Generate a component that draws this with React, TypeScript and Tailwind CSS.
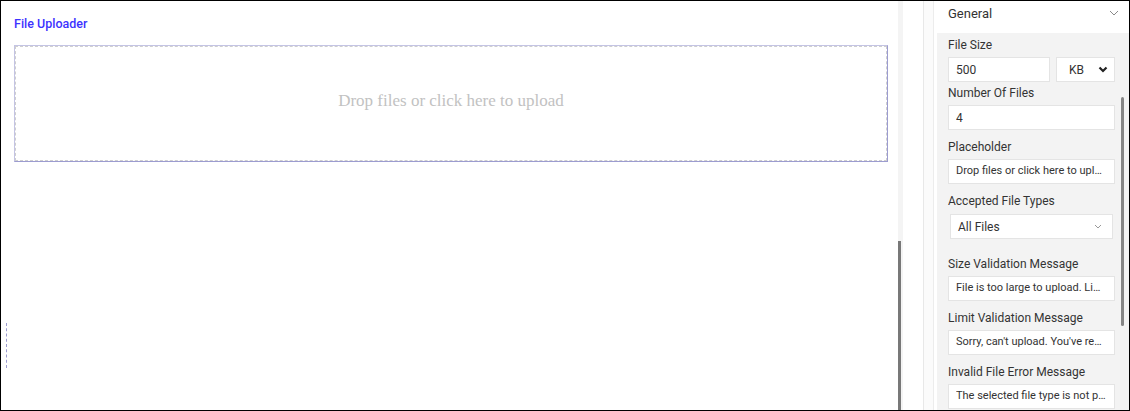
import { ReactNode } from "react";

function Label({ children, className = "" }: { children: ReactNode; className?: string }) {
  return (
    <div className={`h-[16px] text-[12px] leading-[16px] text-[#333] ${className}`}>{children}</div>
  );
}

function TextBox({ value, small = false }: { value: string; small?: boolean }) {
  return (
    <div
      className={`mt-[4px] flex h-[25px] min-w-0 items-center overflow-hidden border border-[#e4e4e4] bg-white px-[7px] text-[#333] ${
        small ? "text-[11px]" : "text-[12px]"
      }`}
    >
      <span className="min-w-0 truncate">{value}</span>
    </div>
  );
}

function Field({ label, value, small, first }: { label: string; value: string; small?: boolean; first?: boolean }) {
  return (
    <div className={first ? "" : "mt-[9px]"}>
      <Label>{label}</Label>
      <TextBox value={value} small={small} />
    </div>
  );
}

export default function App() {
  return (
    <div
      className="flex h-[411px] w-[1130px] overflow-hidden border border-black bg-white"
      style={{ fontFamily: "Roboto, 'Liberation Sans', sans-serif" }}
    >
      {/* canvas */}
      <div className="relative w-[897px] shrink-0 pl-[13px] pr-[10px] pt-[15px]">
        <div className="h-[16px] text-[12.5px] font-medium leading-[16px] text-[#3d33ff]">File Uploader</div>
        <div className="mt-[13px] h-[117px] border border-[#c4c4e4] border-b-[#9c9cd0] border-r-[#9c9cd0]">
          <div className="flex h-full items-center justify-center border border-dashed border-[#cfcfcf] pb-[6px]">
            <span
              className="text-[17px] text-[#c2c2c2]"
              style={{ fontFamily: "'Liberation Serif', 'Times New Roman', serif" }}
            >
              Drop files or click here to upload
            </span>
          </div>
        </div>
        <div className="absolute left-[5px] top-[322px] h-[45px] border-l border-dashed border-[#9c9cd0]" />
      </div>

      {/* canvas scrollbar */}
      <div className="flex w-[5px] shrink-0 flex-col bg-[#f4f4f4]">
        <div className="h-[240px]" />
        <div className="w-[3px] flex-1 bg-[#787878]" />
      </div>

      <div className="w-[20px] shrink-0 bg-white" />
      <div className="w-[10px] shrink-0 border-l border-[#e8e8e8] bg-[#fbfbfb]" />

      {/* properties panel */}
      <div className="flex min-w-0 flex-1 flex-col border-l border-[#ececec]">
        <div className="flex h-[32px] shrink-0 items-start justify-between bg-white pl-[14px] pr-[10px] pt-[5px]">
          <span className="text-[13px] leading-[16px] text-[#333]">General</span>
          <svg width="10" height="6" viewBox="0 0 10 6" className="mt-[4px]">
            <path d="M1 1l4 4 4-4" fill="none" stroke="#8a8a8a" strokeWidth="1" />
          </svg>
        </div>
        <div className="ml-[3px] flex min-w-0 flex-1 overflow-hidden bg-[#f3f3f3]">
          <div className="min-w-0 flex-1 pl-[11px] pt-[4px]">
            <Label>File Size</Label>
            <div className="mt-[4px] flex gap-[6px]">
              <div className="flex h-[25px] w-[102px] shrink-0 items-center border border-[#e4e4e4] bg-white px-[7px] text-[12px] text-[#333]">
                500
              </div>
              <div className="flex h-[25px] min-w-0 flex-1 items-center justify-end gap-[14px] border border-[#e4e4e4] bg-white pr-[6px] text-[12px] text-[#333]">
                <span>KB</span>
                <svg width="10" height="7" viewBox="0 0 10 7">
                  <path d="M1.5 1.5l3.5 3.5 3.5-3.5" fill="none" stroke="#222" strokeWidth="2.2" />
                </svg>
              </div>
            </div>
            <Label className="mt-[3px]">Number Of Files</Label>
            <TextBox value="4" />
            <Field label="Placeholder" value="Drop files or click here to upload" small />
            <div className="mt-[9px]">
              <Label>Accepted File Types</Label>
              <div className="mx-[2px] mt-[5px] flex h-[25px] items-center justify-between border border-[#e4e4e4] bg-white pl-[7px] pr-[10px] text-[12px] text-[#333]">
                <span>All Files</span>
                <svg width="8" height="5" viewBox="0 0 8 5">
                  <path d="M1 1l3 3 3-3" fill="none" stroke="#999" strokeWidth="1" />
                </svg>
              </div>
            </div>
            <div className="mt-[17px]">
              <Label>Size Validation Message</Label>
              <TextBox value="File is too large to upload. Limit is 500 KB" small />
            </div>
            <Field label="Limit Validation Message" value="Sorry, can't upload. You've reached the limit" small />
            <Field label="Invalid File Error Message" value="The selected file type is not permitted" small />
          </div>
          <div className="flex w-[14px] shrink-0 flex-col items-center pt-[64px]">
            <div className="h-[229px] w-[3px] rounded-full bg-[#858585]" />
          </div>
        </div>
      </div>
    </div>
  );
}
